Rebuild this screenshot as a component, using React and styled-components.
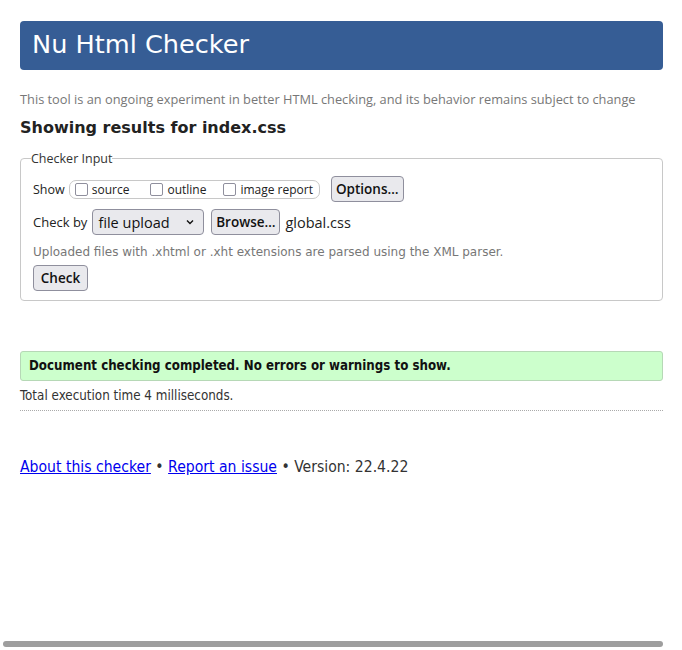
import React from "react";
import styled, { createGlobalStyle } from "styled-components";

const Global = createGlobalStyle`
  html, body { margin: 0; padding: 0; background: #fff; }
  body { font-family: "DejaVu Sans", sans-serif; color: #222; overflow: hidden; }
`;

const Page = styled.div`
  padding: 21px 19px 0 20px;
  width: 643px;
`;

const Header = styled.h1`
  margin: 0;
  height: 49px;
  background: #365d95;
  border-radius: 4px;
  color: #fff;
  font-family: "DejaVu Sans", sans-serif;
  font-weight: normal;
  font-size: 25.6px;
  line-height: 46px;
  padding-left: 12px;
`;

const Tagline = styled.p`
  margin: 20px 0 0;
  font-family: "Open Sans", sans-serif;
  font-size: 12.8px;
  color: #777;
  line-height: 18px;
`;

const Title = styled.h2`
  margin: 10px 0 0;
  font-family: "DejaVu Sans", sans-serif;
  font-weight: bold;
  font-size: 16px;
  line-height: 20px;
  color: #222;
`;

const Fieldset = styled.fieldset`
  margin: 12px 0 0;
  padding: 9px 12px 9px;
  border: 1px solid #c8c8c8;
  border-radius: 4px;
  font-family: "Open Sans", sans-serif;
  font-size: 12.5px;
  color: #222;
`;

const Legend = styled.legend`
  padding: 0;
  margin-left: -2px;
  font-size: 12.5px;
  color: #333;
`;

const Row = styled.div`
  display: flex;
  align-items: center;
  margin-top: ${(p) => p.$mt || 0}px;
`;

const Label = styled.span`
  font-size: ${(p) => p.$fs || 12.5}px;
  color: #222;
  margin-right: ${(p) => p.$mr || 0}px;
`;

const CheckGroup = styled.div`
  display: flex;
  align-items: center;
  height: 19px;
  width: 251px;
  box-sizing: border-box;
  padding: 0 5px;
  border: 1px solid #c8c8c8;
  border-radius: 7px;
  margin-right: 11px;
`;

const CheckItem = styled.label`
  display: flex;
  align-items: center;
  gap: 4px;
  font-size: 12px;
  color: #222;
  margin-right: ${(p) => p.$mr || 0}px;
`;

const Box = styled.span`
  display: inline-block;
  width: 11px;
  height: 11px;
  border: 1px solid #8f8f9d;
  border-radius: 2px;
  background: #fff;
`;

const Button = styled.button`
  font-family: "Open Sans", sans-serif;
  font-size: 13.5px;
  font-weight: 600;
  color: #111;
  background: #e9e9ed;
  border: 1px solid #8f8f9d;
  border-radius: 4px;
  height: 26px;
  box-sizing: border-box;
  width: ${(p) => p.$w}px;
  padding: 0;
  line-height: 24px;
  margin-right: ${(p) => p.$mr || 0}px;
`;

const Select = styled.div`
  display: flex;
  align-items: center;
  justify-content: space-between;
  padding: 0 8px 0 5px;
  box-sizing: border-box;
  width: 112px;
  height: 26px;
  background: #e9e9ed;
  border: 1px solid #8f8f9d;
  border-radius: 4px;
  font-size: 14.5px;
  color: #111;
  margin-right: 7px;
`;

const FileName = styled.span`
  font-size: 14.5px;
  color: #222;
`;

const Note = styled.p`
  margin: 10px 0 0;
  font-family: "DejaVu Sans", sans-serif;
  font-size: 12px;
  color: #777;
  line-height: 14px;
`;

const Success = styled.div`
  margin-top: 50px;
  height: 28px;
  background: #ccffcc;
  border: 1px solid #b6d8b6;
  border-radius: 3px;
  padding-left: 8px;
  font-family: "DejaVu Sans", sans-serif;
  font-stretch: condensed;
  font-weight: bold;
  font-size: 13.2px;
  line-height: 28px;
  color: #111;
`;

const Timing = styled.p`
  margin: 7px 0 0;
  padding-bottom: 6px;
  border-bottom: 1px dotted #aaa;
  font-family: "DejaVu Sans", sans-serif;
  font-stretch: condensed;
  font-size: 13.3px;
  line-height: 16px;
  color: #333;
`;

const Footer = styled.p`
  margin: 47px 0 0;
  font-family: "DejaVu Sans", sans-serif;
  font-stretch: condensed;
  font-size: 15.6px;
  line-height: 18px;
  color: #333;
`;

const Link = styled.a`
  color: #0000ee;
  text-decoration: underline;
`;

const ScrollThumb = styled.div`
  position: fixed;
  left: 3px;
  top: 641px;
  width: 660px;
  height: 6px;
  border-radius: 3px;
  background: #9e9e9e;
`;

const Chevron = () => (
  <svg width="10" height="10" viewBox="0 0 10 10">
    <path d="M2 3.5 L5 6.5 L8 3.5" fill="none" stroke="#111" strokeWidth="1.4" />
  </svg>
);

export default function App() {
  return (
    <>
      <Global />
      <Page>
        <Header>Nu Html Checker</Header>
        <Tagline>
          This tool is an ongoing experiment in better HTML checking, and its behavior remains subject to change
        </Tagline>
        <Title>Showing results for index.css</Title>
        <Fieldset>
          <Legend>Checker Input</Legend>
          <Row>
            <Label $mr={4}>Show</Label>
            <CheckGroup>
              <CheckItem $mr={21}><Box />source</CheckItem>
              <CheckItem $mr={17}><Box />outline</CheckItem>
              <CheckItem><Box />image report</CheckItem>
            </CheckGroup>
            <Button $w={73}>Options…</Button>
          </Row>
          <Row $mt={7}>
            <Label $fs={13} $mr={5}>Check by</Label>
            <Select>
              <span>file upload</span>
              <Chevron />
            </Select>
            <Button $w={69} $mr={5}>Browse…</Button>
            <FileName>global.css</FileName>
          </Row>
          <Note>Uploaded files with .xhtml or .xht extensions are parsed using the XML parser.</Note>
          <Row $mt={6}>
            <Button $w={55}>Check</Button>
          </Row>
        </Fieldset>
        <Success>Document checking completed. No errors or warnings to show.</Success>
        <Timing>Total execution time 4 milliseconds.</Timing>
        <Footer>
          <Link href="#">About this checker</Link> • <Link href="#">Report an issue</Link> • Version: 22.4.22
        </Footer>
      </Page>
      <ScrollThumb />
    </>
  );
}
